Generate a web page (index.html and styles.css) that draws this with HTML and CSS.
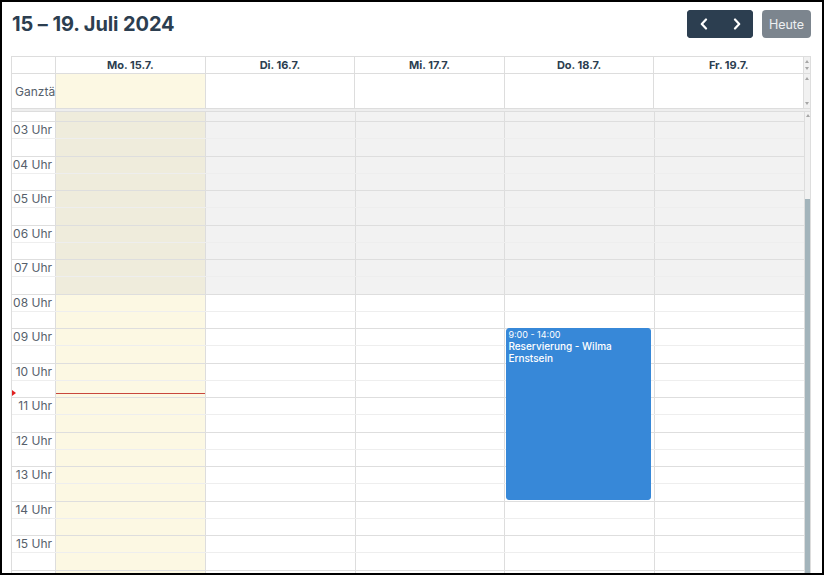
FILE: index.html
```html
<!DOCTYPE html>
<html lang="de">
<head>
<meta charset="utf-8">
<title>Kalender</title>
<link rel="stylesheet" href="styles.css">
</head>
<body>
<div class="frame">
  <div class="toolbar">
    <h2 class="title">15 – 19. Juli 2024</h2>
    <div class="actions">
      <div class="btn-group">
        <button class="btn btn-dark" aria-label="Zurück"><svg width="8" height="12" viewBox="0 0 8 12"><path d="M6 1.5L1.8 6L6 10.5" fill="none" stroke="#fff" stroke-width="2.2" stroke-linecap="round" stroke-linejoin="round"/></svg></button>
        <button class="btn btn-dark" aria-label="Weiter"><svg width="8" height="12" viewBox="0 0 8 12"><path d="M2 1.5L6.2 6L2 10.5" fill="none" stroke="#fff" stroke-width="2.2" stroke-linecap="round" stroke-linejoin="round"/></svg></button>
      </div>
      <button class="btn btn-today">Heute</button>
    </div>
  </div>

  <div class="cal">
    <div class="row head">
      <div class="axis"></div>
      <div class="day">Mo. 15.7.</div>
      <div class="day">Di. 16.7.</div>
      <div class="day">Mi. 17.7.</div>
      <div class="day">Do. 18.7.</div>
      <div class="day">Fr. 19.7.</div>
      <div class="gutter gutter-head"><span class="arr up"></span><span class="arr down"></span></div>
    </div>
    <div class="row allday">
      <div class="axis allday-label">Ganztägig</div>
      <div class="day today"></div>
      <div class="day"></div>
      <div class="day"></div>
      <div class="day"></div>
      <div class="day"></div>
      <div class="gutter gutter-allday"><span class="arr up"></span><span class="arr down"></span></div>
    </div>
    <div class="divider"></div>

    <div class="tg">
      <div class="tg-main">
        <div class="tg-content">
          <div class="slats">
            <div class="slot hour"><div class="slot-label">02 Uhr</div><div class="lane"></div></div>
            <div class="slot"><div class="slot-label"></div><div class="lane"></div></div>
            <div class="slot hour"><div class="slot-label">03 Uhr</div><div class="lane"></div></div>
            <div class="slot"><div class="slot-label"></div><div class="lane"></div></div>
            <div class="slot hour"><div class="slot-label">04 Uhr</div><div class="lane"></div></div>
            <div class="slot"><div class="slot-label"></div><div class="lane"></div></div>
            <div class="slot hour"><div class="slot-label">05 Uhr</div><div class="lane"></div></div>
            <div class="slot"><div class="slot-label"></div><div class="lane"></div></div>
            <div class="slot hour"><div class="slot-label">06 Uhr</div><div class="lane"></div></div>
            <div class="slot"><div class="slot-label"></div><div class="lane"></div></div>
            <div class="slot hour"><div class="slot-label">07 Uhr</div><div class="lane"></div></div>
            <div class="slot"><div class="slot-label"></div><div class="lane"></div></div>
            <div class="slot hour"><div class="slot-label">08 Uhr</div><div class="lane"></div></div>
            <div class="slot"><div class="slot-label"></div><div class="lane"></div></div>
            <div class="slot hour"><div class="slot-label">09 Uhr</div><div class="lane"></div></div>
            <div class="slot"><div class="slot-label"></div><div class="lane"></div></div>
            <div class="slot hour"><div class="slot-label">10 Uhr</div><div class="lane"></div></div>
            <div class="slot"><div class="slot-label"></div><div class="lane"></div></div>
            <div class="slot hour"><div class="slot-label">11 Uhr</div><div class="lane"></div></div>
            <div class="slot"><div class="slot-label"></div><div class="lane"></div></div>
            <div class="slot hour"><div class="slot-label">12 Uhr</div><div class="lane"></div></div>
            <div class="slot"><div class="slot-label"></div><div class="lane"></div></div>
            <div class="slot hour"><div class="slot-label">13 Uhr</div><div class="lane"></div></div>
            <div class="slot"><div class="slot-label"></div><div class="lane"></div></div>
            <div class="slot hour"><div class="slot-label">14 Uhr</div><div class="lane"></div></div>
            <div class="slot"><div class="slot-label"></div><div class="lane"></div></div>
            <div class="slot hour"><div class="slot-label">15 Uhr</div><div class="lane"></div></div>
            <div class="slot"><div class="slot-label"></div><div class="lane"></div></div>
            <div class="slot hour"><div class="slot-label">16 Uhr</div><div class="lane"></div></div>
            <div class="slot"><div class="slot-label"></div><div class="lane"></div></div>
            <div class="slot hour"><div class="slot-label">17 Uhr</div><div class="lane"></div></div>
            <div class="slot"><div class="slot-label"></div><div class="lane"></div></div>
          </div>

          <div class="cols bg-cols">
            <div class="col today"><div class="nonbiz"></div></div>
            <div class="col"><div class="nonbiz"></div></div>
            <div class="col"><div class="nonbiz"></div></div>
            <div class="col"><div class="nonbiz"></div></div>
            <div class="col"><div class="nonbiz"></div></div>
          </div>

          <div class="cols fg-cols">
            <div class="col"><div class="now-line" style="top:306.5px"></div></div>
            <div class="col"></div>
            <div class="col"></div>
            <div class="col">
              <div class="event" style="top:241.5px;height:171.5px">
                <div class="event-time">9:00 - 14:00</div>
                <div class="event-title">Reservierung - Wilma Ernstsein</div>
              </div>
            </div>
            <div class="col"></div>
          </div>

          <div class="now-arrow" style="top:303.5px"></div>
        </div>
      </div>
      <div class="gutter tg-gutter"><span class="arr up"></span><div class="thumb"></div></div>
    </div>
  </div>
</div>
</body>
</html>
```

FILE: styles.css
```css
* { box-sizing: border-box; }
html, body { margin: 0; background: #fff; }
body {
  font-family: Inter, "Noto Sans", "Liberation Sans", sans-serif;
  color: #2c3e50;
}

.frame {
  width: 824px;
  height: 575px;
  border: 2px solid #000;
  overflow: hidden;
  padding: 8px 11px 0 9px;
  display: flex;
  flex-direction: column;
  background: #fff;
}

/* toolbar */
.toolbar {
  display: flex;
  justify-content: space-between;
  align-items: center;
  height: 28px;
  margin-bottom: 18px;
  flex: none;
}
.title {
  margin: 0;
  padding-left: 1px;
  font-size: 20px;
  font-weight: 700;
  line-height: 28px;
  color: #2c3e50;
  letter-spacing: -0.1px;
}
.actions { display: flex; gap: 9px; }
.btn-group { display: flex; border-radius: 4px; overflow: hidden; background: #2c3e50; }
.btn {
  border: 0;
  height: 28px;
  padding: 0;
  display: flex;
  align-items: center;
  justify-content: center;
  font-family: inherit;
}
.btn-dark { width: 33px; background: #2c3e50; }
.btn-today {
  width: 49px;
  background: #7c858e;
  color: #eef0f2;
  border-radius: 4px;
  font-size: 12.5px;
}

/* calendar */
.cal {
  border: 1px solid #ddd;
  flex: none;
}
.row {
  display: grid;
  grid-template-columns: 43px repeat(5, 1fr) 7px;
}
.day { border-left: 1px solid #ddd; }
.head {
  height: 17px;
  border-bottom: 1px solid #ddd;
}
.head .day {
  font-size: 11px;
  font-weight: 700;
  line-height: 16px;
  text-align: center;
  color: #2c3e50;
}
.allday {
  height: 35px;
  border-bottom: 1px solid #ddd;
}
.allday-label {
  font-size: 12px;
  color: #56606b;
  padding-left: 3px;
  white-space: nowrap;
  overflow: hidden;
  display: flex;
  align-items: center;
}
.today { background: #fcf8e3; }
.divider {
  height: 3px;
  background: #eee;
  border-bottom: 1px solid #ddd;
}

/* gutters (scrollbar areas) */
.gutter {
  border-left: 1px solid #ddd;
  background: #f1f1f1;
  display: flex;
  flex-direction: column;
  align-items: center;
}
.gutter-head { justify-content: space-between; padding: 3px 0 3px; }
.gutter-allday { justify-content: space-between; padding: 3px 0 3px; }
.arr {
  width: 0;
  height: 0;
  border-left: 2.5px solid transparent;
  border-right: 2.5px solid transparent;
}
.arr.up { border-bottom: 3px solid #a6a6a6; }
.arr.down { border-top: 3px solid #a6a6a6; }

/* time grid */
.tg {
  display: flex;
  height: 470px;
}
.tg-main {
  flex: 1;
  position: relative;
  overflow: hidden;
}
.tg-content {
  position: relative;
  margin-top: -25.5px;
}
.slats { position: relative; z-index: 1; }
.slot {
  display: grid;
  grid-template-columns: 43px 1fr;
  height: 17.25px;
  border-top: 1px solid #eeeeee;
}
.slot.hour { border-top-color: #dedede; }
.slot-label {
  font-size: 12px;
  line-height: 16px;
  text-align: right;
  padding-right: 3px;
  color: #56606b;
  white-space: nowrap;
  background: #fff;
}

.cols {
  position: absolute;
  top: 0;
  bottom: 0;
  left: 43px;
  right: 0;
  display: grid;
  grid-template-columns: repeat(5, 1fr);
}
.bg-cols { z-index: 0; }
.fg-cols { z-index: 2; }
.bg-cols .col { border-left: 1px solid #ddd; position: relative; }
.fg-cols .col { border-left: 1px solid transparent; position: relative; }
.nonbiz {
  position: absolute;
  top: 0;
  left: 0;
  right: 0;
  height: 207px;
  background: rgba(200, 200, 200, 0.24);
}

.event {
  position: absolute;
  left: 1px;
  right: 3px;
  background: #3788d8;
  border: 1px solid #3788d8;
  border-radius: 3px;
  color: #fff;
  padding: 0 1px;
  overflow: hidden;
}
.event-time { font-size: 9px; line-height: 11px; }
.event-title { font-size: 10px; line-height: 12px; font-weight: 500; }

.now-line {
  position: absolute;
  left: 0;
  right: 0;
  height: 1px;
  background: #c8473c;
}
.now-arrow {
  position: absolute;
  left: 0;
  z-index: 3;
  width: 0;
  height: 0;
  border-top: 3px solid transparent;
  border-bottom: 3px solid transparent;
  border-left: 4px solid #e02020;
}

.tg-gutter { justify-content: flex-start; padding-top: 2px; }
.thumb {
  margin-top: 82px;
  width: 5px;
  flex: 1;
  background: #a3b4bb;
}
```
